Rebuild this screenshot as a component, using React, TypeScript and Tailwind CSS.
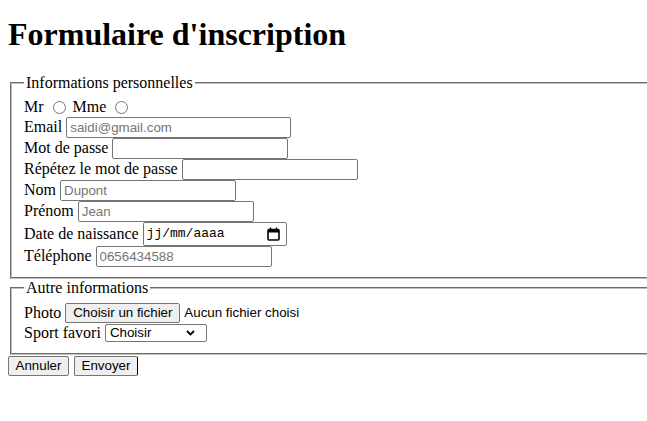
import React from "react";

const serif = "font-['Liberation_Serif','Times_New_Roman',serif]";
const sans = "font-['Liberation_Sans',Arial,sans-serif]";
const inputCls = `h-[21px] border border-[#767676] rounded-[2px] px-[3px] text-[13.33px] text-black bg-white placeholder:text-[#757575] outline-none ${sans}`;

function Row({ label, children, h = "h-[21px]" }: { label: string; children: React.ReactNode; h?: string }) {
  return (
    <div className={`flex items-center gap-1 ${h}`}>
      <label>{label}</label>
      {children}
    </div>
  );
}

function CalendarIcon() {
  return (
    <svg width="13" height="14" viewBox="0 0 13 14" fill="none">
      <rect x="1" y="2.5" width="11" height="10.5" rx="1" stroke="black" strokeWidth="1.6" />
      <rect x="1" y="2.5" width="11" height="3" fill="black" />
      <line x1="3.5" y1="0.5" x2="3.5" y2="3" stroke="black" strokeWidth="1.4" />
      <line x1="9.5" y1="0.5" x2="9.5" y2="3" stroke="black" strokeWidth="1.4" />
    </svg>
  );
}

export default function App() {
  return (
    <div className={`w-full min-h-[421px] overflow-hidden bg-white text-black text-[16px] leading-[18.4px] px-2 ${serif}`}>
      {/* titre */}
      <h1 className="text-[32px] leading-[37px] font-bold mt-[16px] mb-[21px]">Formulaire d'inscription</h1>

      <form>
        {/* infos personnelles */}
        <fieldset className="ml-[2px] mr-[-20px] [border:2px_groove_#c0c0c0] px-3 pt-[5.6px] pb-[10px]">
          <legend className="px-[2px]">Informations personnelles</legend>
          <div className="flex items-center h-[19px]">
            <label>Mr</label>
            <input type="radio" name="civ" className="ml-[9px] mr-[3px] w-[13px] h-[13px]" />
            <label className="ml-[4px]">Mme</label>
            <input type="radio" name="civ" className="ml-[9px] mr-[3px] w-[13px] h-[13px]" />
          </div>
          <Row label="Email">
            <input type="email" placeholder="saidi@gmail.com" className={`${inputCls} w-[225px]`} />
          </Row>
          <Row label="Mot de passe">
            <input type="password" className={`${inputCls} w-[176px]`} />
          </Row>
          <Row label="Répétez le mot de passe">
            <input type="password" className={`${inputCls} w-[176px]`} />
          </Row>
          <Row label="Nom">
            <input type="text" placeholder="Dupont" className={`${inputCls} w-[176px]`} />
          </Row>
          <Row label="Prénom">
            <input type="text" placeholder="Jean" className={`${inputCls} w-[176px]`} />
          </Row>
          <Row label="Date de naissance" h="h-[24px]">
            <div className="flex items-center justify-between w-[144px] h-[24px] border border-[#767676] rounded-[2px] pl-[3px] pr-[6px] bg-white">
              <span className="font-['Liberation_Mono','DejaVu_Sans_Mono',monospace] text-[13px]">jj/mm/aaaa</span>
              <CalendarIcon />
            </div>
          </Row>
          <Row label="Téléphone">
            <input type="tel" placeholder="0656434588" className={`${inputCls} w-[176px]`} />
          </Row>
        </fieldset>

        {/* autres infos */}
        <fieldset className="ml-[2px] mr-[-20px] [border:2px_groove_#c0c0c0] px-3 pt-[5.6px] pb-[10px]">
          <legend className="px-[2px]">Autre informations</legend>
          <Row label="Photo" h="h-[20px]">
            <div className={`flex items-center text-[13.33px] ${sans}`}>
              <button type="button" className="h-[20px] w-[115px] bg-[#efefef] border border-[#767676] rounded-[2px] mr-[4px]">
                Choisir un fichier
              </button>
              <span>Aucun fichier choisi</span>
            </div>
          </Row>
          <Row label="Sport favori" h="h-[20px]">
            <div className={`flex items-center justify-between w-[102px] h-[18px] border border-[#767676] rounded-[2px] pl-[4px] pr-[11px] bg-white text-[13.33px] ${sans}`}>
              <span>Choisir</span>
              <svg width="9" height="6" viewBox="0 0 9 6" fill="none">
                <path d="M1 1l3.5 3.5L8 1" stroke="black" strokeWidth="1.8" />
              </svg>
            </div>
          </Row>
        </fieldset>

        <div className={`flex gap-[5px] mt-[1px] text-[13.33px] ${sans}`}>
          <button type="reset" className="h-[20px] w-[61px] bg-[#efefef] border border-[#767676] rounded-[2px]">Annuler</button>
          <button type="submit" className="h-[20px] w-[64px] bg-[#efefef] border border-[#767676] border-r-black rounded-[2px]">Envoyer</button>
        </div>
      </form>
    </div>
  );
}
